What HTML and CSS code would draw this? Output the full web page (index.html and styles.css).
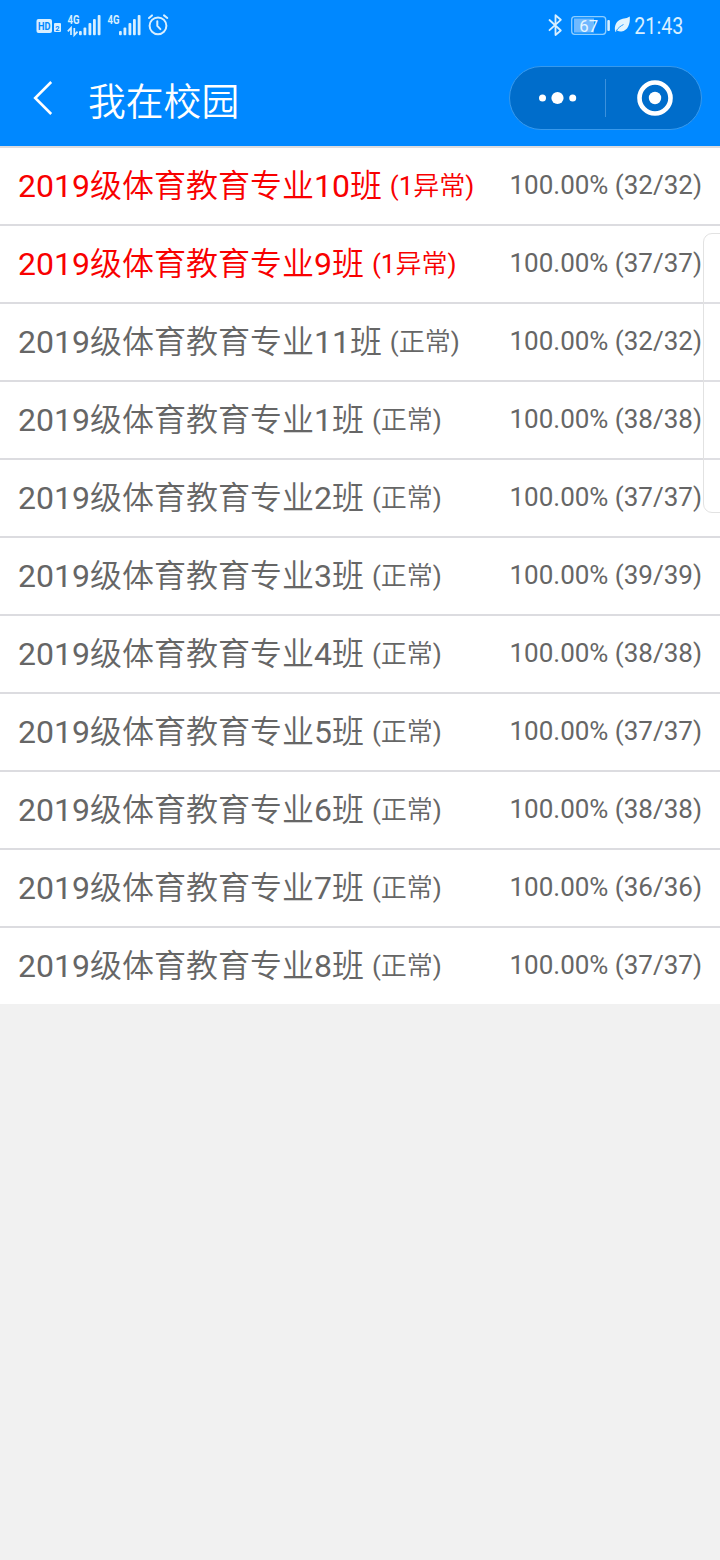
FILE: index.html
```html
<!DOCTYPE html>
<html lang="zh-CN">
<head>
<meta charset="utf-8">
<title>我在校园</title>
<link rel="stylesheet" href="styles.css">
</head>
<body>
<header class="header">
  <div class="status">
    <svg class="status-left" width="140" height="36" viewBox="32 7 140 36">
      <rect x="36.500" y="19" width="15.500" height="14" rx="2" fill="#d8efff"/>
      <text x="38" y="29.800" class="hd" textLength="12.500" lengthAdjust="spacingAndGlyphs">HD</text>
      <rect x="54" y="23" width="7" height="9" rx="1" fill="#d8efff"/>
      <text x="55.300" y="30.500" class="sim">2</text>
      <text x="67.500" y="23.800" class="net" textLength="12" lengthAdjust="spacingAndGlyphs">4G</text>
      <path d="M71 35v-7l-3.200 3.400M74.300 28v7l3.200-3.400" fill="none" stroke="#d8efff" stroke-width="1.700"/>
      <g fill="#d8efff">
        <rect x="79" y="31" width="2.800" height="4.200" rx="1"/><rect x="83.500" y="27.500" width="2.800" height="7.700" rx="1"/><rect x="88.500" y="23" width="2.800" height="12.200" rx="1"/><rect x="93" y="19" width="2.800" height="16.200" rx="1"/><rect x="97.700" y="15" width="2.800" height="20.200" rx="1"/>
        <rect x="119" y="31" width="2.800" height="4.200" rx="1"/><rect x="123.500" y="27.500" width="2.800" height="7.700" rx="1"/><rect x="128.500" y="23" width="2.800" height="12.200" rx="1"/><rect x="133" y="19" width="2.800" height="16.200" rx="1"/><rect x="137.700" y="15" width="2.800" height="20.200" rx="1"/>
      </g>
      <text x="107.500" y="23.800" class="net" textLength="12" lengthAdjust="spacingAndGlyphs">4G</text>
      <g fill="none" stroke="#d8efff" stroke-width="2" stroke-linecap="round">
        <circle cx="158" cy="25.800" r="8.400"/>
        <path d="M157.300 21.300v4.600l3.100 3.200M149 18l3-2.600M164 15.400l3.300 2.600"/>
      </g>
    </svg>
    <svg class="status-right" width="154" height="36" viewBox="546 7 154 36">
      <path d="M549.500 20l11.300 10.500-5.300 4.500V15.200l5.300 4.600-11.300 10.400" fill="none" stroke="#d8efff" stroke-width="1.800" stroke-linejoin="round" stroke-linecap="round"/>
      <rect x="574" y="18.500" width="20" height="14" fill="#70b9ff"/>
      <rect x="571.700" y="16.700" width="34" height="17.600" rx="3" fill="none" stroke="#8dcdff" stroke-width="1.300"/>
      <rect x="607.300" y="20" width="2.600" height="11" rx="1" fill="#d8efff"/>
      <text x="579.300" y="31.800" class="battery" textLength="18.800" lengthAdjust="spacingAndGlyphs">67</text>
      <path d="M629.800 16.500c.6 7.500-2 14.300-8.300 14.900-1.700.2-3.100-.2-4.300-1l-1.800 1.600c-1.300-4.500-.3-8.900 3.400-11.600 3.400-2.400 7-1.200 11-3.900z" fill="#e1f4ff"/>
      <path d="M616 31c2.400-3.300 4.600-5 7.500-6.500" fill="none" stroke="#0088ff" stroke-width=".8"/>
      <text x="634.300" y="34" class="clock" textLength="49" lengthAdjust="spacingAndGlyphs">21:43</text>
    </svg>
  </div>
  <nav class="nav">
    <svg class="back" width="24" height="38" viewBox="0 0 24 38"><path d="M20.200 3L4.200 19l16 16" fill="none" stroke="#fff" stroke-width="2.600"/></svg>
    <h1 class="title">我在校园</h1>
    <div class="capsule">
      <svg class="more" width="40" height="14" viewBox="0 0 40 14" fill="#fff"><circle cx="4.500" cy="7" r="3.500"/><circle cx="19.500" cy="7" r="6.100"/><circle cx="34.700" cy="7" r="3.500"/></svg>
      <span class="divider"></span>
      <svg class="target" width="36" height="36" viewBox="0 0 36 36"><circle cx="18" cy="18" r="15.500" fill="none" stroke="#fff" stroke-width="4.600"/><circle cx="18" cy="18" r="6.200" fill="#fff"/></svg>
    </div>
  </nav>
</header>
<main class="list">
  <div class="row alert"><span class="name">2019级体育教育专业10班 <small>(1异常)</small></span><span class="rate">100.00% (32/32)</span></div>
  <div class="row alert"><span class="name">2019级体育教育专业9班 <small>(1异常)</small></span><span class="rate">100.00% (37/37)</span></div>
  <div class="row"><span class="name">2019级体育教育专业11班 <small>(正常)</small></span><span class="rate">100.00% (32/32)</span></div>
  <div class="row"><span class="name">2019级体育教育专业1班 <small>(正常)</small></span><span class="rate">100.00% (38/38)</span></div>
  <div class="row"><span class="name">2019级体育教育专业2班 <small>(正常)</small></span><span class="rate">100.00% (37/37)</span></div>
  <div class="row"><span class="name">2019级体育教育专业3班 <small>(正常)</small></span><span class="rate">100.00% (39/39)</span></div>
  <div class="row"><span class="name">2019级体育教育专业4班 <small>(正常)</small></span><span class="rate">100.00% (38/38)</span></div>
  <div class="row"><span class="name">2019级体育教育专业5班 <small>(正常)</small></span><span class="rate">100.00% (37/37)</span></div>
  <div class="row"><span class="name">2019级体育教育专业6班 <small>(正常)</small></span><span class="rate">100.00% (38/38)</span></div>
  <div class="row"><span class="name">2019级体育教育专业7班 <small>(正常)</small></span><span class="rate">100.00% (36/36)</span></div>
  <div class="row"><span class="name">2019级体育教育专业8班 <small>(正常)</small></span><span class="rate">100.00% (37/37)</span></div>
</main>
<div class="edge-panel"></div>
</body>
</html>
```
FILE: styles.css
```css
* { box-sizing: border-box; }
body {
  margin: 0;
  min-height: 1560px;
  background: #f1f1f1;
  font-family: Roboto, "Noto Sans CJK SC DemiLight", "Noto Sans CJK SC", sans-serif;
  position: relative;
  overflow: hidden;
}
.header { height: 146px; background: #0088ff; }
.status {
  display: flex;
  justify-content: space-between;
  height: 50px;
  padding: 7px 20px 0 32px;
}
.hd { font: bold 10.5px Roboto, sans-serif; fill: #0088ff; }
.sim { font: bold 7.5px Roboto, sans-serif; fill: #0088ff; }
.net { font: bold 12px Roboto, sans-serif; fill: #d8efff; }
.battery { font: 400 17px Roboto, sans-serif; fill: #e4f5ff; }
.clock { font: 24px Roboto, sans-serif; fill: #d8efff; }
.nav {
  display: flex;
  align-items: center;
  height: 96px;
  padding: 0 18px 0 31px;
}
.title {
  margin: 7px 0 0 33px;
  color: #fff;
  font-size: 37.8px;
  font-weight: 400;
  line-height: 50px;
}
.capsule {
  display: flex;
  align-items: center;
  width: 193px;
  height: 64px;
  margin-left: auto;
  padding: 0 28px;
  border: 1px solid #3899ec;
  border-radius: 32px;
  background: #006dcb;
}
.divider { width: 1px; height: 38px; margin-left: 27px; background: #3c91dc; }
.target { margin-left: auto; }
.list { background: #fff; }
.row {
  display: flex;
  align-items: center;
  justify-content: space-between;
  height: 78px;
  padding: 0 18px;
  border-top: 2px solid #dcdce0;
  color: #666;
  white-space: nowrap;
}
.name { font-size: 32px; line-height: 48px; }
.name small { font-size: 26px; line-height: 1; vertical-align: 2px; }
.rate { padding-bottom: 2px; font-size: 26px; line-height: 38px; }
.alert .name { color: #f80000; }
.edge-panel {
  position: absolute;
  top: 233px;
  right: -2px;
  width: 19px;
  height: 280px;
  border: 1px solid #e2e2e2;
  border-radius: 9px 0 0 9px;
  background: rgba(255, 255, 255, .1);
}
```
